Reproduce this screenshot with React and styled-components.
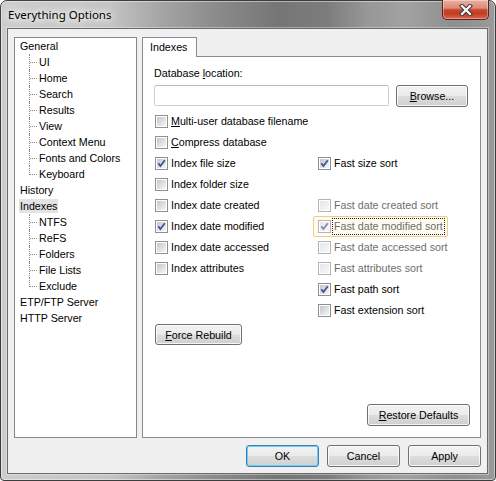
import React from 'react';
import styled, { createGlobalStyle } from 'styled-components';

const tree = [
  {
    label: 'General',
    children: ['UI', 'Home', 'Search', 'Results', 'View', 'Context Menu', 'Fonts and Colors', 'Keyboard'],
  },
  { label: 'History' },
  { label: 'Indexes', selected: true, children: ['NTFS', 'ReFS', 'Folders', 'File Lists', 'Exclude'] },
  { label: 'ETP/FTP Server' },
  { label: 'HTTP Server' },
];

const rows = [
  [{ label: <><u>M</u>ulti-user database filename</> }, null],
  [{ label: <><u>C</u>ompress database</> }, null],
  [{ label: 'Index file size', checked: true }, { label: 'Fast size sort', checked: true }],
  [{ label: 'Index folder size' }, null],
  [{ label: 'Index date created' }, { label: 'Fast date created sort', disabled: true }],
  [
    { label: 'Index date modified', checked: true },
    { label: 'Fast date modified sort', checked: true, disabled: true, hot: true },
  ],
  [{ label: 'Index date accessed' }, { label: 'Fast date accessed sort', disabled: true }],
  [{ label: 'Index attributes' }, { label: 'Fast attributes sort', disabled: true }],
  [null, { label: 'Fast path sort', checked: true }],
  [null, { label: 'Fast extension sort' }],
];

function Check({ checked, disabled }) {
  return (
    <CheckBox $disabled={disabled}>
      {checked && (
        <svg width="9" height="9" viewBox="0 0 9 9">
          <path
            d="M1.3 4.3 L3.4 7.1 L7.8 1.3"
            fill="none"
            stroke={disabled ? '#7f8bb0' : '#3d5495'}
            strokeWidth="1.8"
          />
        </svg>
      )}
    </CheckBox>
  );
}

function CheckItem({ item }) {
  if (!item) return <span />;
  return (
    <CheckRow $hot={item.hot}>
      <Check checked={item.checked} disabled={item.disabled} />
      <CheckText $disabled={item.disabled} $focus={item.hot}>
        {item.label}
      </CheckText>
    </CheckRow>
  );
}

function App() {
  return (
    <>
      <GlobalStyle />
      <Window>
        <TitleBar>
          <Title>Everything Options</Title>
          <CloseButton>
            <svg width="14" height="12" viewBox="0 0 14 12">
              <path d="M3 2 L11 10 M11 2 L3 10" stroke="#3a3a3a" strokeWidth="4.2" strokeLinecap="square" />
              <path d="M3 2 L11 10 M11 2 L3 10" stroke="#fff" strokeWidth="2.2" strokeLinecap="square" />
            </svg>
          </CloseButton>
        </TitleBar>
        <Client>
          <Main>
            <Tree>
              {tree.map((node) => (
                <li key={node.label}>
                  <NodeRow>
                    <NodeLabel $selected={node.selected}>{node.label}</NodeLabel>
                  </NodeRow>
                  {node.children && (
                    <Children>
                      {node.children.map((c) => (
                        <ChildRow key={c}>
                          <NodeLabel>{c}</NodeLabel>
                        </ChildRow>
                      ))}
                    </Children>
                  )}
                </li>
              ))}
            </Tree>
            <TabArea>
              <TabStrip>
                <Tab>Indexes</Tab>
              </TabStrip>
              <TabPanel>
                <FieldLabel>
                  Database <u>l</u>ocation:
                </FieldLabel>
                <InputRow>
                  <TextInput />
                  <Button $w={72} $h={22} style={{ marginRight: 1 }}>
                    <u>B</u>rowse...
                  </Button>
                </InputRow>
                <CheckGrid>
                  {rows.map((r, i) => (
                    <React.Fragment key={i}>
                      <CheckItem item={r[0]} />
                      <CheckItem item={r[1]} />
                    </React.Fragment>
                  ))}
                </CheckGrid>
                <RebuildButton $w={87} $h={21}>
                  <u>F</u>orce Rebuild
                </RebuildButton>
                <RestoreButton $w={103} $h={22}>
                  <u>R</u>estore Defaults
                </RestoreButton>
              </TabPanel>
            </TabArea>
          </Main>
          <Footer>
            <Button $w={73} $h={22} $default>
              OK
            </Button>
            <Button $w={73} $h={22}>
              Cancel
            </Button>
            <Button $w={73} $h={22}>
              Apply
            </Button>
          </Footer>
        </Client>
      </Window>
    </>
  );
}

export default App;

const GlobalStyle = createGlobalStyle`
  html, body {
    margin: 0;
    padding: 0;
    background: #fff;
  }
  body {
    font-family: "Liberation Sans", Arial, sans-serif;
    font-size: 10.7px;
    color: #000;
  }
  * {
    box-sizing: border-box;
  }
`;

const Window = styled.div`
  width: 496px;
  height: 481px;
  display: flex;
  flex-direction: column;
  padding: 0 7px 6px 6px;
  border: 1px solid #3c3c3c;
  border-radius: 7px 7px 4px 4px;
  background: linear-gradient(
    to right,
    #cdcdcd 0%,
    #c4c4c4 22%,
    #a6a6a6 32%,
    #8a8a8a 44%,
    #767676 56%,
    #7c7c7c 66%,
    #979797 74%,
    #a2a2a2 82%,
    #8e8e8e 92%,
    #9a9a9a 100%
  );
  box-shadow: inset 0 0 0 1px rgba(255, 255, 255, 0.45);
`;

const TitleBar = styled.div`
  height: 27px;
  display: flex;
  justify-content: space-between;
  align-items: flex-start;
  margin-right: -1px;
`;

const Title = styled.span`
  margin-top: 6px;
  padding-left: 1px;
  font-family: "Noto Sans", sans-serif;
  font-size: 11.5px;
  line-height: 16px;
  color: #000;
  text-shadow: 0 0 6px #fff, 0 0 10px #fff, 0 0 16px #fff, 0 0 20px rgba(255, 255, 255, 0.9);
`;

const CloseButton = styled.div`
  width: 47px;
  height: 20px;
  margin-top: -1px;
  display: flex;
  align-items: center;
  justify-content: center;
  border: 1px solid #5a2418;
  border-top: none;
  border-radius: 0 0 5px 5px;
  background: linear-gradient(
    to bottom,
    #eab0a2 0%,
    #de8b77 42%,
    #c8462b 52%,
    #c23d22 72%,
    #d8694f 100%
  );
  box-shadow: inset 0 0 0 1px rgba(255, 255, 255, 0.35);
`;

const Client = styled.div`
  flex: 1;
  display: flex;
  flex-direction: column;
  background: #f0f0f0;
  border: 1px solid #6a6a6a;
  box-shadow: 0 0 0 1px rgba(255, 255, 255, 0.35);
`;

const Main = styled.div`
  flex: 1;
  min-height: 0;
  display: flex;
  gap: 5px;
  padding: 8px 6px 0 6px;
`;

const Tree = styled.ul`
  width: 123px;
  margin: 0;
  padding: 0;
  list-style: none;
  background: #fff;
  border: 1px solid #828790;
`;

const NodeRow = styled.div`
  height: 16px;
  display: flex;
  align-items: center;
  padding-left: 4px;
`;

const NodeLabel = styled.span`
  padding: 0 1px;
  line-height: 14px;
  white-space: nowrap;
  background: ${(p) => (p.$selected ? '#e3e3e3' : 'transparent')};
`;

const Children = styled.ul`
  margin: 0;
  padding: 0;
  list-style: none;
`;

const ChildRow = styled.li`
  position: relative;
  height: 16px;
  display: flex;
  align-items: center;
  padding-left: 23px;

  &::before {
    content: '';
    position: absolute;
    left: 15px;
    top: 8px;
    width: 7px;
    border-top: 1px dotted #8a8a8a;
  }

  &::after {
    content: '';
    position: absolute;
    left: 14px;
    top: 0;
    height: 16px;
    border-left: 1px dotted #8a8a8a;
  }

  &:last-child::after {
    height: 9px;
  }
`;

const TabArea = styled.div`
  flex: 1;
  display: flex;
  flex-direction: column;
`;

const TabStrip = styled.div`
  display: flex;
`;

const Tab = styled.div`
  height: 20px;
  width: 55px;
  padding: 0 7px;
  line-height: 19px;
  background: #fff;
  border: 1px solid #898c95;
  border-bottom: none;
  margin-bottom: -1px;
  position: relative;
  z-index: 1;
`;

const TabPanel = styled.div`
  flex: 1;
  display: flex;
  flex-direction: column;
  background: #fff;
  border: 1px solid #898c95;
  padding: 9px 10px 11px 11px;
`;

const FieldLabel = styled.div`
  line-height: 14px;
`;

const InputRow = styled.div`
  display: flex;
  align-items: flex-start;
  gap: 7px;
  margin-top: 5px;
`;

const TextInput = styled.div`
  width: 235px;
  height: 21px;
  background: #fff;
  border: 1px solid #cdd1d6;
  border-top-color: #b9bcc2;
  border-radius: 2px;
`;

const Button = styled.div`
  width: ${(p) => p.$w}px;
  height: ${(p) => p.$h}px;
  display: flex;
  align-items: center;
  justify-content: center;
  white-space: nowrap;
  border: 1px solid ${(p) => (p.$default ? '#3c7fb1' : '#707070')};
  border-radius: 3px;
  background: linear-gradient(to bottom, #f2f2f2 0%, #ebebeb 48%, #dddddd 52%, #cfcfcf 100%);
  box-shadow: inset 0 0 0 1px ${(p) => (p.$default ? '#6fcdf5' : 'rgba(255, 255, 255, 0.8)')};
`;

const CheckGrid = styled.div`
  display: grid;
  grid-template-columns: 163px auto;
  grid-auto-rows: 21px;
  margin: 4px 0 0 -4px;
`;

const CheckRow = styled.div`
  justify-self: start;
  display: flex;
  align-items: center;
  height: 21px;
  padding: 0 2px 0 4px;
  white-space: nowrap;
  border: 1px solid ${(p) => (p.$hot ? '#f1ca86' : 'transparent')};
  border-radius: 2px;
  background: ${(p) => (p.$hot ? '#fffbf1' : 'transparent')};
`;

const CheckBox = styled.span`
  flex: none;
  width: 13px;
  height: 13px;
  padding: 1px;
  border: 1px solid ${(p) => (p.$disabled ? '#b4b4b4' : '#8e8f8f')};
  background: ${(p) =>
      p.$disabled
        ? 'linear-gradient(135deg, #e6e6e6, #f8f8f8)'
        : 'linear-gradient(135deg, #c3c7cd, #f6f6f6)'}
    content-box,
    #fff;

  svg {
    display: block;
  }
`;

const CheckText = styled.span`
  margin-left: 1px;
  padding: 1px;
  line-height: 13px;
  border: 1px dotted ${(p) => (p.$focus ? '#222' : 'transparent')};
  color: ${(p) => (p.$disabled ? '#6d6d6d' : '#000')};
`;

const RebuildButton = styled(Button)`
  margin: 3px 0 0 1px;
`;

const RestoreButton = styled(Button)`
  margin-top: auto;
  align-self: flex-end;
`;

const Footer = styled.div`
  display: flex;
  justify-content: flex-end;
  gap: 8px;
  padding: 7px 6px 6px;
`;
